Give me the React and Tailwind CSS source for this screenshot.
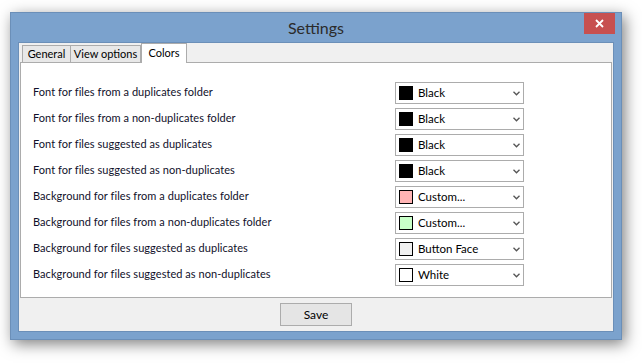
import React from 'react';

const rows = [
  { label: 'Font for files from a duplicates folder', swatch: 'bg-black', value: 'Black' },
  { label: 'Font for files from a non-duplicates folder', swatch: 'bg-black', value: 'Black' },
  { label: 'Font for files suggested as duplicates', swatch: 'bg-black', value: 'Black' },
  { label: 'Font for files suggested as non-duplicates', swatch: 'bg-black', value: 'Black' },
  { label: 'Background for files from a duplicates folder', swatch: 'bg-[#ffb4b4]', value: 'Custom...' },
  { label: 'Background for files from a non-duplicates folder', swatch: 'bg-[#c8ffc8]', value: 'Custom...' },
  { label: 'Background for files suggested as duplicates', swatch: 'bg-[#f0f0f0]', value: 'Button Face' },
  { label: 'Background for files suggested as non-duplicates', swatch: 'bg-white', value: 'White' },
];

const Chevron = () => (
  <svg width="7" height="5" viewBox="0 0 7 5" className="shrink-0">
    <path d="M0.5 0.8 L3.5 3.8 L6.5 0.8" fill="none" stroke="#555" strokeWidth="1.3" />
  </svg>
);

const ColorSelect = ({ swatch, value }) => (
  <div className="flex items-center w-[129px] h-[22px] bg-white border border-[#acacac] pl-[3px] pr-[3px]">
    <span className={`w-[14px] h-[14px] border border-black ${swatch}`} />
    <span className="ml-[5px] flex-1 text-[11.5px] leading-none text-black">{value}</span>
    <Chevron />
  </div>
);

const App = () => {
  return (
    <div
      className="w-[642px] h-[363px] bg-white pl-[10px] pt-[12px]"
      style={{ fontFamily: 'Lato, "Liberation Sans", sans-serif' }}
    >
      <div className="w-[612px] h-[328px] bg-[#7ba2cd] border border-[#6b8fb8] shadow-[3px_4px_14px_rgba(0,0,0,0.5)] flex flex-col">
        {/* title bar */}
        <div className="relative h-[29px] flex items-center justify-center">
          <span className="text-[16px] text-[#2b2b2b]">Settings</span>
          <div className="absolute right-[6px] top-0 w-[31px] h-[21px] bg-[#c75050] flex items-center justify-center">
            <svg width="9" height="9" viewBox="0 0 9 9">
              <path d="M1 1 L8 8 M8 1 L1 8" stroke="#fff" strokeWidth="1.8" />
            </svg>
          </div>
        </div>

        {/* client */}
        <div className="mx-[7px] flex-1 mb-[7px] bg-[#f0f0f0] border border-[#6b8fb8] flex flex-col">
          <div className="px-[1px] flex flex-col">
            <div className="flex items-end h-[19px] pl-[2px] text-[11px] text-black">
              <div className="h-[17px] w-[49px] border border-[#acacac] border-b-0 bg-[#e8e8e8] flex items-center justify-center">General</div>
              <div className="h-[17px] w-[70px] border border-[#acacac] border-b-0 border-l-0 bg-[#e8e8e8] flex items-center justify-center">View options</div>
              <div className="h-[20px] w-[46px] border border-[#acacac] border-b-0 bg-white flex items-start justify-center pt-[1px] -mb-[1px] relative">Colors</div>
            </div>
            <div className="h-[236px] bg-white border border-[#acacac] pt-[19px] pl-[12px] pr-[87px] flex flex-col gap-[4px]">
              {rows.map((r) => (
                <div key={r.label} className="flex items-center justify-between h-[22px]">
                  <span className="text-[11px] tracking-[0.05px] text-[#10102a] -mt-[2px]">{r.label}</span>
                  <ColorSelect swatch={r.swatch} value={r.value} />
                </div>
              ))}
            </div>
          </div>
          <div className="flex justify-center pt-[5px]">
            <button className="w-[72px] h-[23px] border border-[#acacac] bg-[#e5e5e5] text-[12px] text-black">
              Save
            </button>
          </div>
        </div>
      </div>
    </div>
  );
};

export default App;
